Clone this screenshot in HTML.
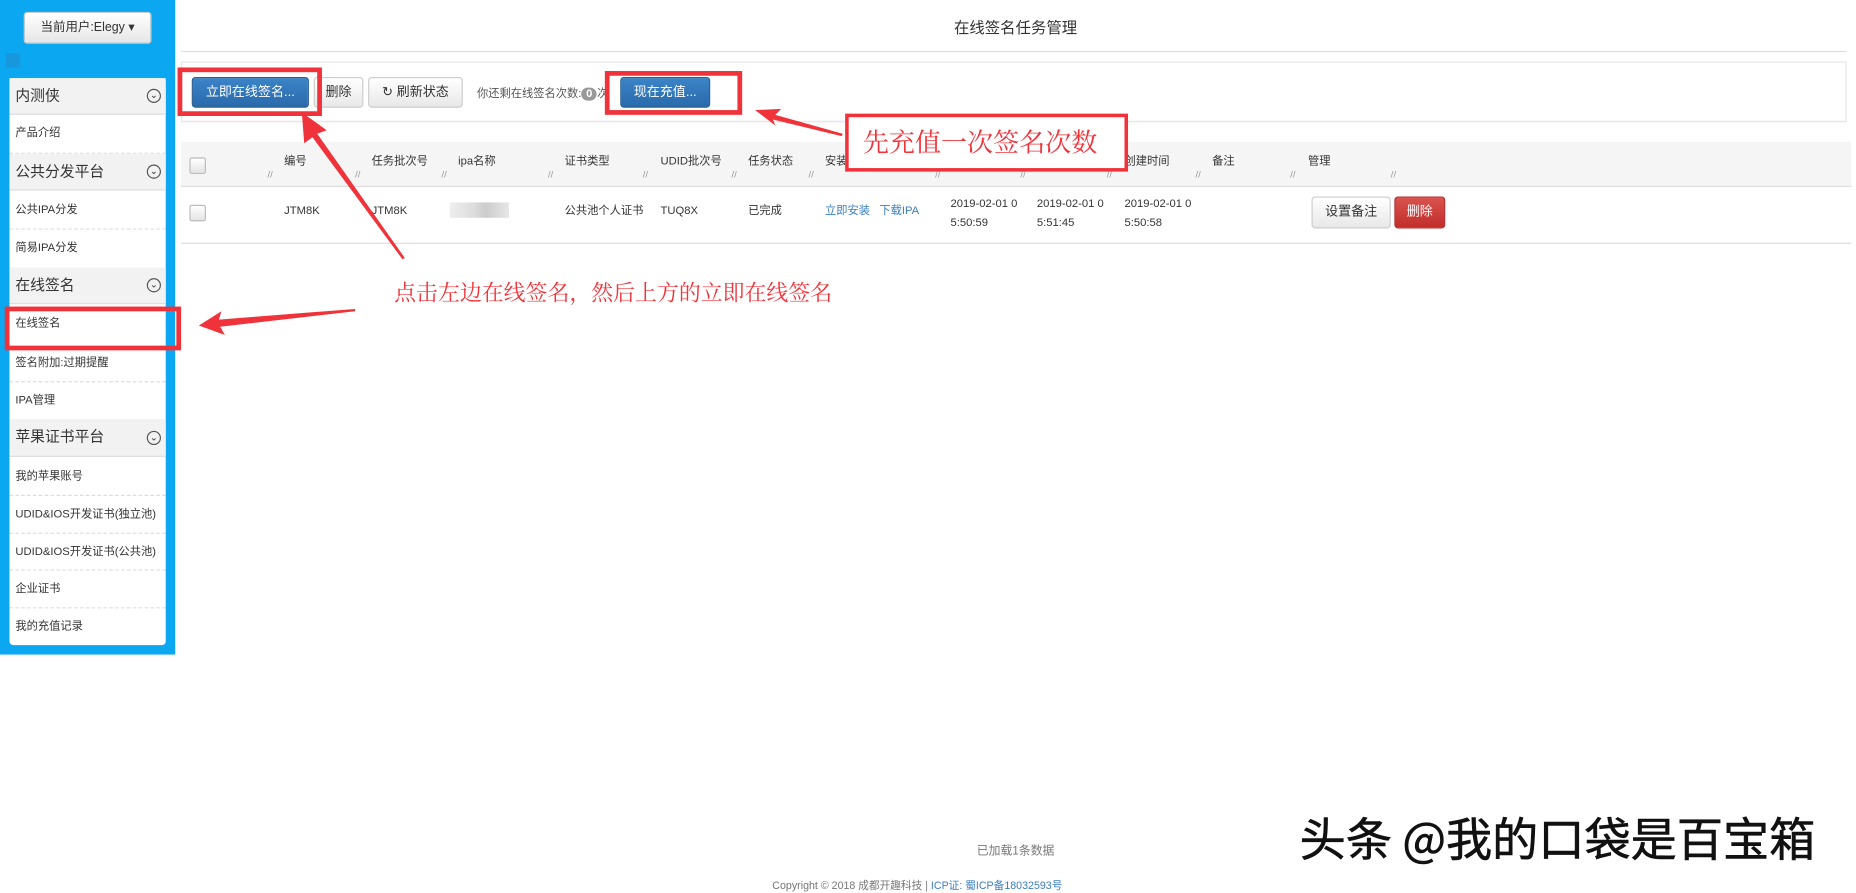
<!DOCTYPE html>
<html><head><meta charset="utf-8"><style>
html,body{margin:0;padding:0;width:1856px;height:890px;overflow:hidden;background:#fff}
#w{position:absolute;left:0;top:0;width:1568px;height:752px;transform:scale(1.18367);transform-origin:0 0;font-family:"Liberation Sans","Noto Sans CJK SC",sans-serif;color:#333;font-size:10px}
.a{position:absolute}
.side{left:0;top:0;width:148px;height:553px;background:#0ba7f1}
.ub{left:20px;top:10px;width:108px;height:27px;background:linear-gradient(#fff,#e6e6e6);border:1px solid #ccc;border-radius:3px;box-sizing:border-box;font-size:10.5px;line-height:25px;text-align:center;color:#333}
.panel{left:8px;top:66px;width:132px;height:479px;background:#fff;border-radius:3px}
.hd{position:absolute;left:8px;width:132px;background:#f2f2f2;border-bottom:1px solid #ddd;box-sizing:border-box;font-size:12.5px;color:#333;padding-left:5px}
.hd i{position:absolute;right:4px;top:50%;margin-top:-6px;width:10px;height:10px;border:1px solid #555;border-radius:50%;font-style:normal;font-size:8px;line-height:9px;text-align:center}
.it{position:absolute;left:8px;width:132px;font-size:9.5px;padding-left:5px;box-sizing:border-box;border-bottom:1px dashed #ddd;color:#333;white-space:nowrap;overflow:hidden}
.btn{position:absolute;height:26px;line-height:24px;box-sizing:border-box;border-radius:3px;font-size:11px;text-align:center}
.bl{background:linear-gradient(#3b84c7,#2a6aab);color:#fff;border:1px solid #2a5f95}
.gr{background:linear-gradient(#fff,#e8e8e8);border:1px solid #ccc;color:#333}
.rd{background:linear-gradient(#d9534f,#c12e2a);color:#fff;border:1px solid #b02a27}
.rb{position:absolute;border:4px solid #f0333a;box-sizing:border-box}
.th{top:131px;font-size:9.5px;color:#333;line-height:12px}
.td{top:173px;font-size:9.5px;color:#333;line-height:12px}
.cb{position:absolute;width:14px;height:14px;border:1px solid #bbb;border-radius:2px;background:linear-gradient(#fff,#e4e4e4);box-sizing:border-box}
.sl{position:absolute;top:143px;font-size:8px;color:#999;line-height:10px}
</style></head><body><div id="w">
<div class="a side"></div>
<div class="a ub">当前用户:Elegy ▾</div>
<div class="a" style="left:5px;top:45px;width:12px;height:12px;background:#1797dc"></div>
<div class="a panel"></div>
<div class="hd" style="top:66px;height:31px;line-height:30px">内测侠<i>⌄</i></div>
<div class="it" style="top:97px;height:33px;line-height:31px">产品介绍</div>
<div class="hd" style="top:130px;height:31px;line-height:30px">公共分发平台<i>⌄</i></div>
<div class="it" style="top:161px;height:33px;line-height:33px">公共IPA分发</div>
<div class="it" style="top:194px;height:32px;line-height:32px;border:none">简易IPA分发</div>
<div class="hd" style="top:226px;height:31px;line-height:30px">在线签名<i>⌄</i></div>
<div class="it" style="top:257px;height:33px;line-height:33px;border:none">在线签名</div>
<div class="it" style="top:290px;height:33px;line-height:33px">签名附加:过期提醒</div>
<div class="it" style="top:323px;height:31px;line-height:31px;border:none">IPA管理</div>
<div class="hd" style="top:354px;height:32px;line-height:31px">苹果证书平台<i>⌄</i></div>
<div class="it" style="top:387px;height:32px;line-height:32px">我的苹果账号</div>
<div class="it" style="top:419px;height:32px;line-height:32px">UDID&amp;IOS开发证书(独立池)</div>
<div class="it" style="top:451px;height:31px;line-height:31px">UDID&amp;IOS开发证书(公共池)</div>
<div class="it" style="top:482px;height:32px;line-height:32px">企业证书</div>
<div class="it" style="top:514px;height:31px;line-height:31px;border:none">我的充值记录</div>

<div class="a" style="left:0;top:13px;width:1716px;text-align:center;font-size:13px;color:#333">在线签名任务管理</div>
<div class="a" style="left:153px;top:43px;width:1407px;height:1px;background:#ddd"></div>
<div class="a" style="left:153px;top:52px;width:1407px;height:51px;border:1px solid #e6e6e6;box-sizing:border-box;box-shadow:0 1px 2px #eee"></div>
<div class="btn bl" style="left:162px;top:65px;width:99px">立即在线签名...</div>
<div class="btn gr" style="left:265px;top:65px;width:42px">删除</div>
<div class="btn gr" style="left:311px;top:65px;width:80px">↻ 刷新状态</div>
<div class="a" style="left:403px;top:71px;font-size:9.5px;color:#555">你还剩在线签名次数:<span style="display:inline-block;background:#999;color:#fff;border-radius:8px;padding:0 4px;font-weight:bold">0</span>次</div>
<div class="btn bl" style="left:524px;top:65px;width:76px">现在充值...</div>

<div class="a" style="left:153px;top:120px;width:1411px;height:37px;background:#f5f5f5;border-bottom:1px solid #ddd"></div>
<div class="cb" style="left:160px;top:133px"></div>
<div class="a th" style="left:240px">编号</div><div class="a th" style="left:314px">任务批次号</div><div class="a th" style="left:387px">ipa名称</div><div class="a th" style="left:477px">证书类型</div><div class="a th" style="left:558px">UDID批次号</div><div class="a th" style="left:632px">任务状态</div><div class="a th" style="left:697px">安装地址</div><div class="a th" style="left:803px">开始时间</div><div class="a th" style="left:876px">完成时间</div><div class="a th" style="left:950px">创建时间</div><div class="a th" style="left:1024px">备注</div><div class="a th" style="left:1105px">管理</div>
<div class="sl" style="left:226px">//</div><div class="sl" style="left:300px">//</div><div class="sl" style="left:373px">//</div><div class="sl" style="left:463px">//</div><div class="sl" style="left:543px">//</div><div class="sl" style="left:618px">//</div><div class="sl" style="left:683px">//</div><div class="sl" style="left:790px">//</div><div class="sl" style="left:862px">//</div><div class="sl" style="left:935px">//</div><div class="sl" style="left:1010px">//</div><div class="sl" style="left:1090px">//</div><div class="sl" style="left:1175px">//</div>
<div class="a" style="left:153px;top:205px;width:1411px;height:1px;background:#ddd"></div>
<div class="cb" style="left:160px;top:173px"></div>
<div class="a td" style="left:240px">JTM8K</div><div class="a td" style="left:314px">JTM8K</div>
<div class="a" style="left:380px;top:171px;width:50px;height:13px;background:linear-gradient(90deg,#eee,#ddd 40%,#ccc 60%,#e6e6e6)"></div>
<div class="a td" style="left:477px">公共池个人证书</div><div class="a td" style="left:558px">TUQ8X</div><div class="a td" style="left:632px">已完成</div>
<div class="a td" style="left:697px;color:#3a7fc1">立即安装 &nbsp; 下载IPA</div>
<div class="a" style="left:803px;top:165px;line-height:16px;font-size:9.5px">2019-02-01 0<br>5:50:59</div>
<div class="a" style="left:876px;top:165px;line-height:16px;font-size:9.5px">2019-02-01 0<br>5:51:45</div>
<div class="a" style="left:950px;top:165px;line-height:16px;font-size:9.5px">2019-02-01 0<br>5:50:58</div>
<div class="btn gr" style="left:1108px;top:166px;width:67px;height:27px">设置备注</div>
<div class="btn rd" style="left:1178px;top:166px;width:43px;height:27px">删除</div>

<div class="a" style="left:0;top:710px;width:1716px;text-align:center;font-size:10px;color:#777">已加载1条数据</div>
<div class="a" style="left:0;top:741px;width:1550px;text-align:center;font-size:9px;color:#777">Copyright © 2018 成都开趣科技 | <span style="color:#3a7fc1">ICP证: 蜀ICP备18032593号</span></div>
<div class="a" style="left:1098px;top:684px;font-size:39px;color:#111;font-family:'Noto Sans CJK SC',sans-serif;line-height:46px;-webkit-text-stroke:0.5px #111;white-space:nowrap">头条 @我的口袋是百宝箱</div>

<div class="rb" style="left:150px;top:57px;width:122px;height:41px"></div>
<div class="rb" style="left:511px;top:60px;width:116px;height:37px"></div>
<div class="rb" style="left:4px;top:259px;width:149px;height:37px"></div>
<div class="a" style="left:714px;top:96px;width:239px;height:49px;border:3px solid #f0333a;box-sizing:border-box;background:#fff"></div>
<div class="a" style="left:729px;top:104px;font-size:22px;color:#f0333a;font-family:'Noto Serif CJK SC',serif">先充值一次签名次数</div>
<div class="a" style="left:333px;top:234px;font-size:18.5px;color:#f0333a;font-family:'Noto Serif CJK SC',serif">点击左边在线签名，然后上方的立即在线签名</div>
<svg class="a" style="left:0;top:0" width="1568" height="752">
<g fill="#f0333a">
<polygon points="255,95 276,110 268,113 342,218 340,219 264,116 257,121"/>
<polygon points="168,275 187,263 185,270 300,261 300,263 186,276 190,283"/>
<polygon points="638,93 660,92 655,97 712,113 711,115 653,101 655,106"/>
</g></svg>
</div></body></html>
